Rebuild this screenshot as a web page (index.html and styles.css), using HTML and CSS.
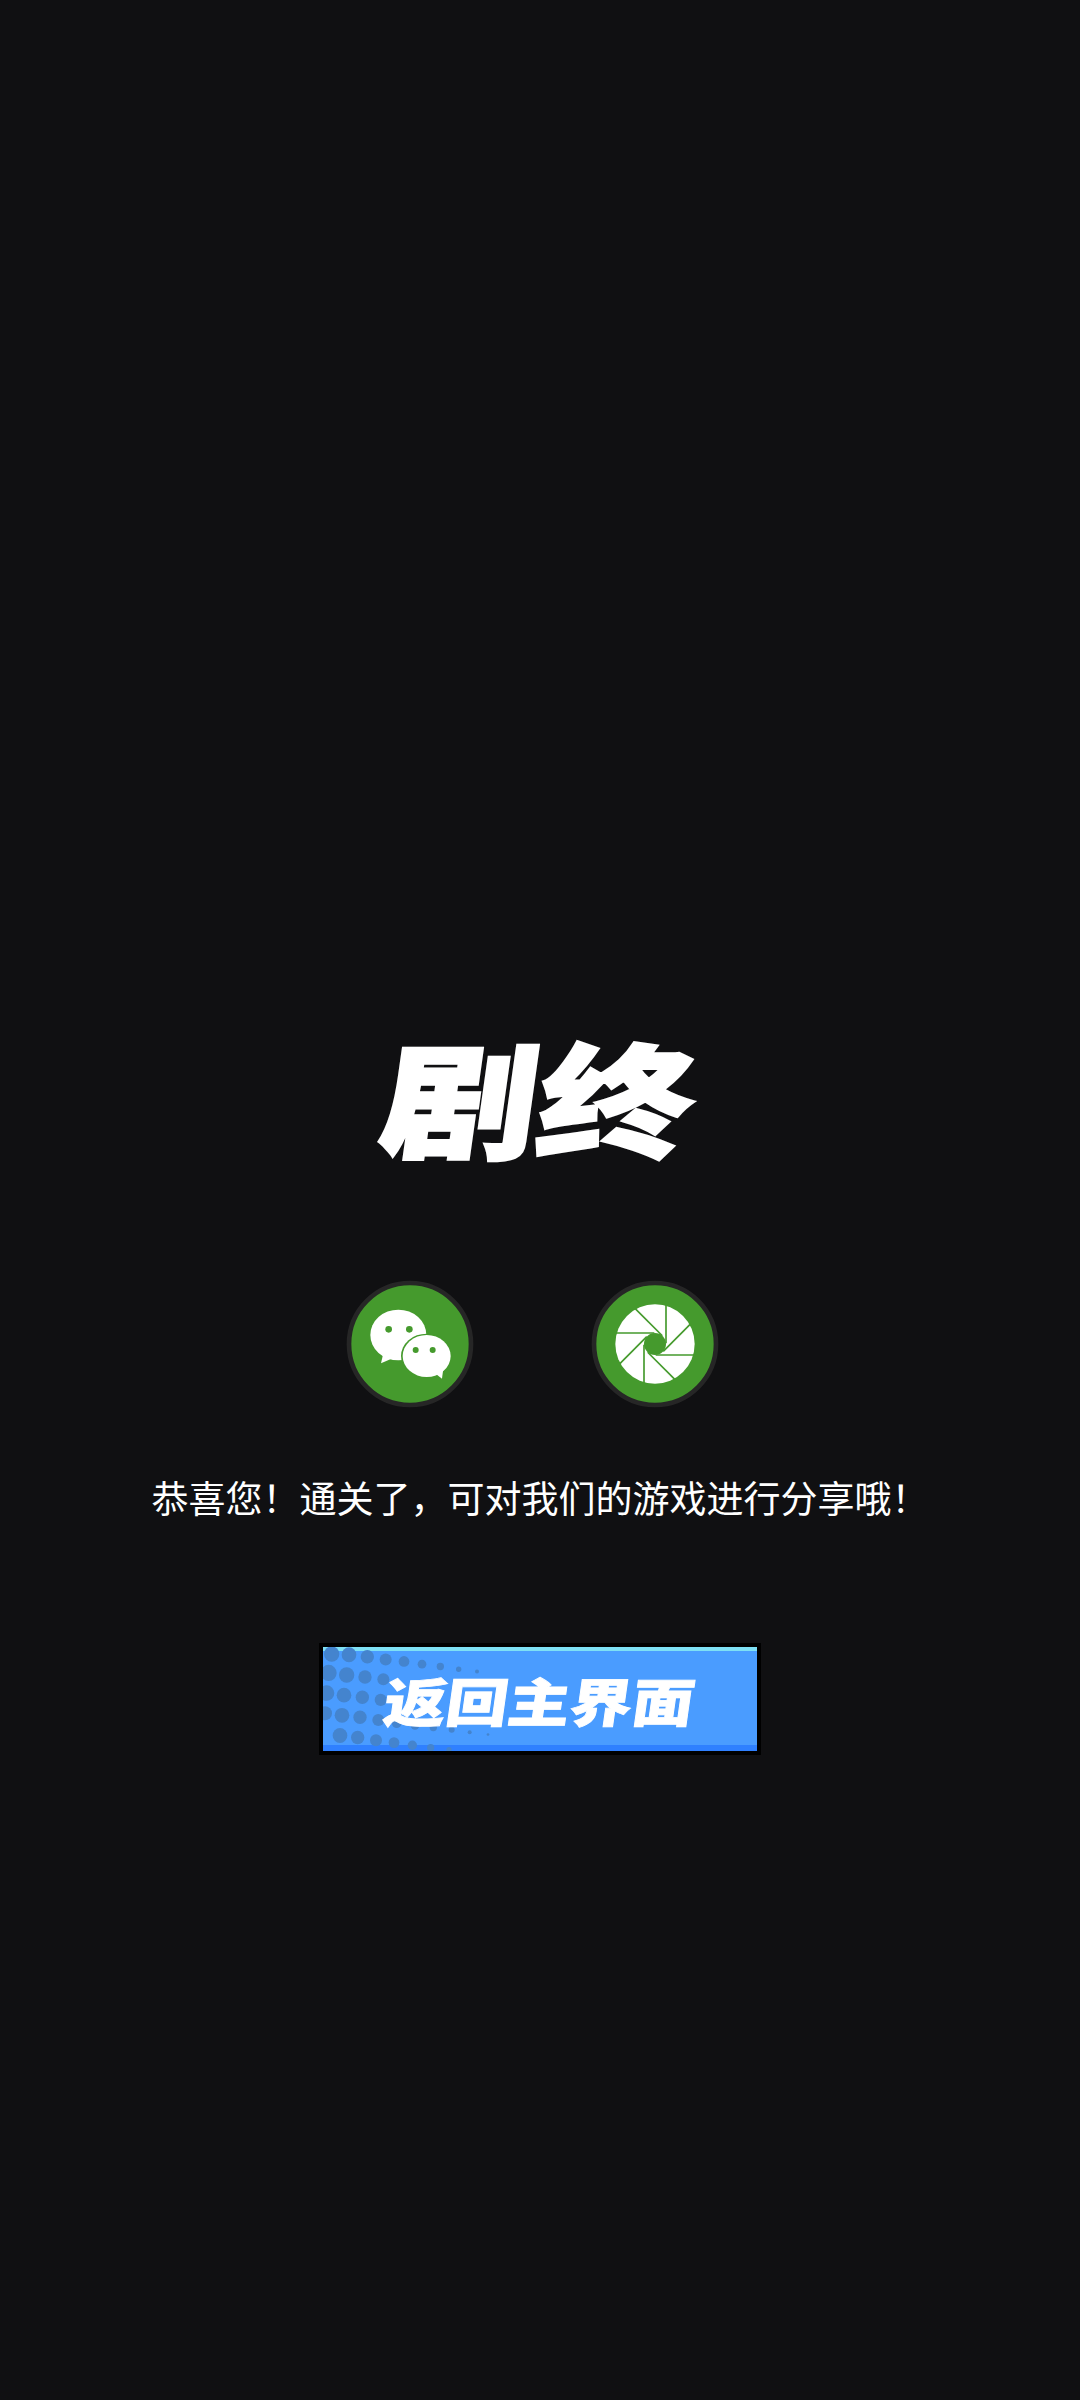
FILE: index.html
```html
<!DOCTYPE html>
<html lang="zh-CN">

<head>
    <title>剧终</title>
    <meta charset="utf-8">
    <link rel="stylesheet" href="styles.css">
</head>

<body>
    <div class="page">
        <h1 class="title">剧终</h1>

        <div class="share">
            <!-- wechat -->
            <div class="share-btn">
                <svg viewBox="0 0 510 510" width="170" height="170">
                    <circle cx="240" cy="252" r="183" fill="#459a2d" stroke="#262626" stroke-width="14" />
                    <ellipse cx="205" cy="225" rx="84" ry="76" fill="#fff" />
                    <path d="M160 280 L153 310 L195 292 Z" fill="#fff" />
                    <circle cx="176" cy="208" r="10" fill="#459a2d" />
                    <circle cx="238" cy="208" r="10" fill="#459a2d" />
                    <ellipse cx="290" cy="288" rx="77" ry="67" fill="#459a2d" />
                    <ellipse cx="290" cy="288" rx="72" ry="63" fill="#fff" />
                    <path d="M315 340 L336 356 L340 325 Z" fill="#fff" />
                    <circle cx="257" cy="270" r="9" fill="#459a2d" />
                    <circle cx="308" cy="270" r="9" fill="#459a2d" />
                </svg>
            </div>
            <!-- moments -->
            <div class="share-btn">
                <svg viewBox="0 0 510 510" width="170" height="170">
                    <circle cx="225" cy="252" r="183" fill="#459a2d" stroke="#262626" stroke-width="14" />
                    <circle cx="225" cy="252" r="119" fill="#fff" />
                    <g stroke="#459a2d" stroke-width="5">
                        <line x1="258" y1="135" x2="258" y2="250" />
                        <line x1="258" y1="135" x2="258" y2="250" transform="rotate(45 225 252)" />
                        <line x1="258" y1="135" x2="258" y2="250" transform="rotate(90 225 252)" />
                        <line x1="258" y1="135" x2="258" y2="250" transform="rotate(135 225 252)" />
                        <line x1="258" y1="135" x2="258" y2="250" transform="rotate(180 225 252)" />
                        <line x1="258" y1="135" x2="258" y2="250" transform="rotate(225 225 252)" />
                        <line x1="258" y1="135" x2="258" y2="250" transform="rotate(270 225 252)" />
                        <line x1="258" y1="135" x2="258" y2="250" transform="rotate(315 225 252)" />
                    </g>
                    <circle cx="225" cy="252" r="33" fill="#459a2d" />
                </svg>
            </div>
        </div>

        <p class="message">恭喜您&#65281;通关了&#65292;可对我们的游戏进行分享哦&#65281;</p>

        <button class="back-btn">
            <svg class="dots" viewBox="39 51 1302 309" preserveAspectRatio="none">
                <g fill="#4484ce">
                    <circle cx="65" cy="72" r="23" />
                    <circle cx="117" cy="74" r="22" />
                    <circle cx="172" cy="80" r="20" />
                    <circle cx="227" cy="88" r="18" />
                    <circle cx="282" cy="94" r="16" />
                    <circle cx="336" cy="102" r="13" />
                    <circle cx="391" cy="109" r="11" />
                    <circle cx="446" cy="117" r="8" />
                    <circle cx="501" cy="124" r="6" />
                    <circle cx="56" cy="128" r="24" />
                    <circle cx="110" cy="134" r="23" />
                    <circle cx="165" cy="140" r="20" />
                    <circle cx="220" cy="147" r="18" />
                    <circle cx="50" cy="188" r="23" />
                    <circle cx="102" cy="194" r="22" />
                    <circle cx="157" cy="200" r="20" />
                    <circle cx="212" cy="208" r="18" />
                    <circle cx="45" cy="248" r="21" />
                    <circle cx="96" cy="254" r="22" />
                    <circle cx="150" cy="260" r="20" />
                    <circle cx="205" cy="268" r="18" />
                    <circle cx="260" cy="278" r="14" />
                    <circle cx="315" cy="284" r="13" />
                    <circle cx="370" cy="290" r="11" />
                    <circle cx="425" cy="297" r="9" />
                    <circle cx="479" cy="304" r="6" />
                    <circle cx="534" cy="311" r="4" />
                    <circle cx="90" cy="314" r="22" />
                    <circle cx="143" cy="320" r="20" />
                    <circle cx="198" cy="328" r="18" />
                    <circle cx="252" cy="335" r="16" />
                    <circle cx="307" cy="343" r="14" />
                    <circle cx="362" cy="350" r="11" />
                    <circle cx="417" cy="356" r="8" />
                </g>
            </svg>
            <span class="back-label">返回主界面</span>
        </button>
    </div>
</body>

</html>
```

FILE: styles.css
```css
body {
    margin: 0;
    background-color: #101012;
}

.page {
    display: flex;
    flex-direction: column;
    align-items: center;
    height: 2400px;
    padding-top: 1010px;
    box-sizing: border-box;
    font-family: "Noto Sans CJK SC", "Noto Sans", sans-serif;
}

.title {
    margin: 0;
    height: 170px;
    color: #fff;
    font-size: 156px;
    font-weight: 900;
    line-height: 170px;
    -webkit-text-stroke: 3px #fff;
    transform: skewX(-8deg) scaleY(0.8);
}

.share {
    display: flex;
    gap: 80px;
    margin-top: 80px;
    height: 170px;
}

.share-btn {
    width: 170px;
    height: 170px;
}

.message {
    margin: 40px 0 0;
    color: #fff;
    font-size: 37px;
    line-height: 54px;
    white-space: nowrap;
}

.back-btn {
    position: relative;
    display: flex;
    align-items: center;
    justify-content: center;
    width: 442px;
    height: 112px;
    margin-top: 119px;
    padding: 0;
    box-sizing: border-box;
    background-color: #4a9cff;
    border: solid #000 4px;
    box-shadow: inset 0 4px 0 #7ee0f5, inset 0 -6px 0 #2f80ff;
    font-family: inherit;
    overflow: hidden;
}

.dots {
    position: absolute;
    left: 0;
    top: 0;
    width: 100%;
    height: 100%;
}

.back-label {
    position: relative;
    color: #fff;
    font-size: 62px;
    font-weight: 900;
    line-height: 70px;
    -webkit-text-stroke: 1px #fff;
    transform: skewX(-8deg) scaleY(0.84);
}
```
